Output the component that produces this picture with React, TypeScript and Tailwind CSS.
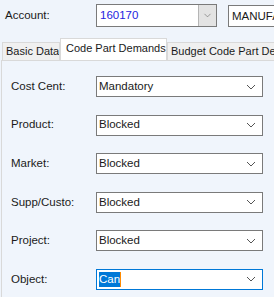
import { ChevronDown } from "lucide-react";

const rows = [
  { label: "Cost Cent:", value: "Mandatory" },
  { label: "Product:", value: "Blocked" },
  { label: "Market:", value: "Blocked" },
  { label: "Supp/Custo:", value: "Blocked" },
  { label: "Project:", value: "Blocked" },
];

const Chevron = () => (
  <svg width="10" height="6" viewBox="0 0 10 6" className="shrink-0">
    <path d="M1 1 L5 5 L9 1" fill="none" stroke="#555" strokeWidth="1" />
  </svg>
);

const App = () => {
  return (
    <div
      className="w-[274px] h-[297px] overflow-hidden bg-[#eff4fb] text-[11.5px] text-[#1a1a1a]"
      style={{ fontFamily: '"Liberation Sans", Arial, sans-serif' }}
    >
      {/* Header */}
      <div className="flex items-center pt-[4px] h-[27px]">
        <span className="w-[96px] pl-[5px] shrink-0">Account:</span>
        <div className="flex h-[23px] w-[121px] shrink-0 border border-[#7a7a7a] bg-white">
          <span className="flex-1 pl-[3px] leading-[21px] text-[#2424e0]">160170</span>
          <div className="w-[18px] flex items-center justify-center bg-[#e3e3e3] border-l border-[#b5b5b5]">
            <ChevronDown size={11} strokeWidth={1.3} className="text-[#666]" />
          </div>
        </div>
        <div className="ml-[11px] h-[22px] flex-1 border border-[#7a7a7a] border-r-0 bg-white pl-[3px] leading-[20px] overflow-hidden whitespace-nowrap">
          MANUFACTURING
        </div>
      </div>

      {/* Tabs */}
      <div className="flex items-end mt-[11px] pl-[2px] h-[22px] whitespace-nowrap text-[11px]">
        <div className="h-[18px] w-[58px] bg-[#f0f0f0] border border-b-0 border-[#d9d9d9] pl-[3px] leading-[17px] overflow-hidden">
          Basic Data
        </div>
        <div className="h-[22px] w-[107px] bg-white border border-b-0 border-[#d9d9d9] pl-[5px] leading-[19px] overflow-hidden">
          Code Part Demands
        </div>
        <div className="h-[18px] flex-1 bg-[#f0f0f0] border border-b-0 border-r-0 border-[#d9d9d9] pl-[3px] leading-[17px] overflow-hidden">
          Budget Code Part Demands
        </div>
      </div>

      {/* Panel */}
      <div className="h-[240px] ml-[1px] border-l border-t border-[#d9d9d9] bg-[#f0f5fc] pt-[15px]">
        <div className="flex flex-col gap-[17.6px]">
          {rows.map((r) => (
            <div key={r.label} className="flex items-center h-[21px]">
              <span className="w-[94px] pl-[9px] shrink-0">{r.label}</span>
              <div className="flex items-center h-[21px] w-[167px] border border-[#7a7a7a] bg-white pl-[2px] pr-[6px]">
                <span className="flex-1">{r.value}</span>
                <Chevron />
              </div>
            </div>
          ))}
          <div className="flex items-center h-[21px]">
            <span className="w-[94px] pl-[9px] shrink-0">Object:</span>
            <div className="flex items-center h-[21px] w-[167px] border border-[#0078d7] bg-white pl-[2px] pr-[6px]">
              <span className="flex-1 flex items-center">
                <span className="bg-[#0078d7] text-white leading-[15px]">Can</span>
                <span className="w-[1px] h-[15px] bg-[#ff8a00]" />
              </span>
              <Chevron />
            </div>
          </div>
        </div>
      </div>
    </div>
  );
};

export default App;
